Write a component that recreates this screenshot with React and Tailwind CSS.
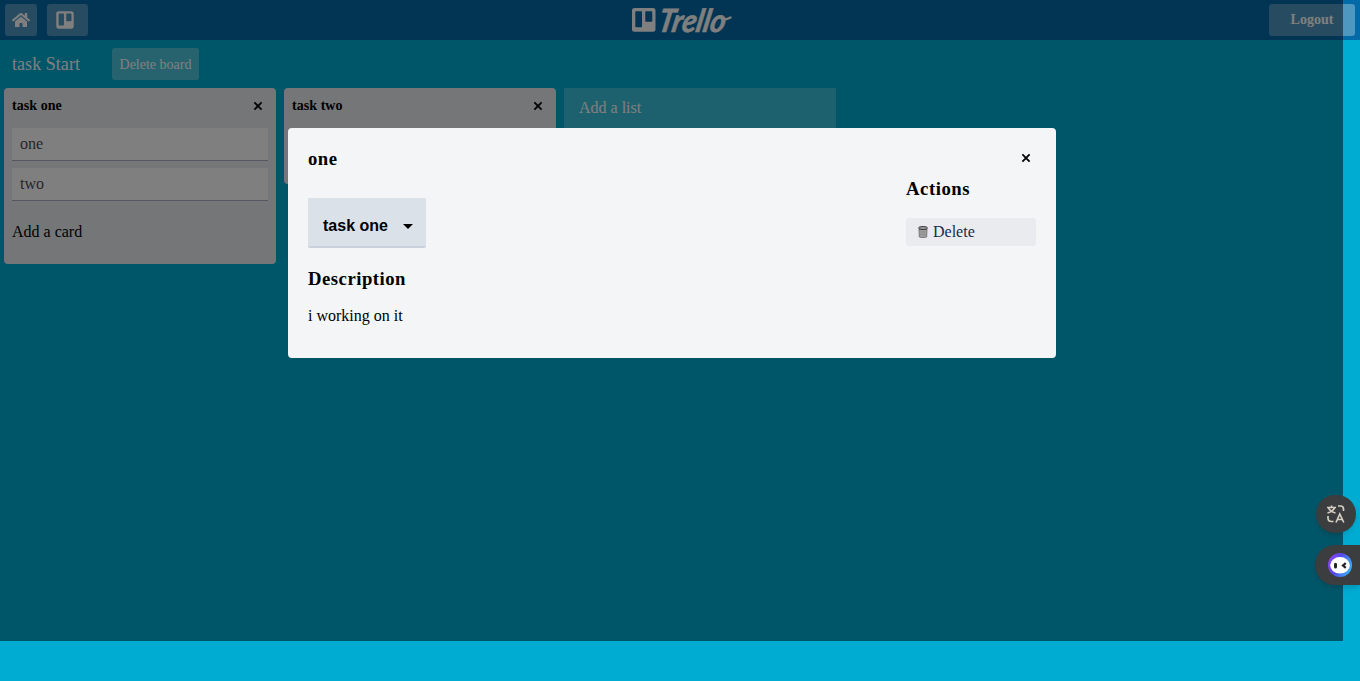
import { FaHome, FaTrello } from 'react-icons/fa';

function Cross() {
  return (
    <svg className="block h-2 w-2 overflow-visible" viewBox="0 0 8 8" aria-hidden="true">
      <path d="M.4.400 7.600 7.600M7.600.4.4 7.600" stroke="#000" strokeWidth="1.800" fill="none" />
    </svg>
  );
}

function Logo() {
  return (
    <svg className="block h-9 w-[102px]" viewBox="0 0 102 36" role="img" aria-label="Trello">
      <path
        fill="#fff"
        fillRule="evenodd"
        d="M3.500 4H22Q24.500 4 24.500 6.500V25.300Q24.500 27.800 22 27.800H3.500Q1 27.800 1 25.300V6.500Q1 4 3.500 4ZM5.100 7.300Q4.300 7.300 4.300 8.100V22.500Q4.300 23.300 5.100 23.300H10.200Q11 23.300 11 22.500V8.100Q11 7.300 10.200 7.300ZM15.100 7.300Q14.300 7.300 14.300 8.100V16.900Q14.300 17.700 15.100 17.700H20.500Q21.300 17.700 21.300 16.900V8.100Q21.300 7.300 20.500 7.300Z"
      />
      <text
        x="0"
        y="0"
        transform="translate(26 27.600) skewX(-11)"
        textLength="67"
        lengthAdjust="spacingAndGlyphs"
        fill="#fff"
        stroke="#fff"
        strokeWidth=".6"
        className="font-['Lato',sans-serif] text-[32px] font-bold italic"
      >
        Trello
      </text>
      <path d="M91 14.500Q94 16.500 99.500 13.500" stroke="#fff" strokeWidth="2.500" strokeLinecap="round" fill="none" />
    </svg>
  );
}

function Trash() {
  return (
    <svg className="block h-3 w-[10px]" viewBox="0 0 10 12" aria-hidden="true">
      <path d="M1 3H9L8.700 11Q5 12.200 1.300 11Z" fill="#aaa" stroke="#666" strokeWidth=".8" />
      <path d="M3 4V11M5 4V11M7 4V11M1.300 6H8.700M1.500 8.500H8.500" stroke="#858585" strokeWidth=".6" />
      <ellipse cx="5" cy="2" rx="4.500" ry="1.400" fill="#aaa" stroke="#222" strokeWidth=".9" />
    </svg>
  );
}

function List({ title, cards, className }) {
  return (
    <section className={`w-[272px] shrink-0 rounded bg-[#ebecf0] px-2 ${className}`}>
      <div className="flex h-10 items-start justify-between pr-[6px]">
        <h2 className="pt-2 text-[14px] leading-[19px] font-bold tracking-[.05px]">{title}</h2>
        <button className="mt-[14px]" aria-label="Remove list"><Cross /></button>
      </div>
      {cards.map((card) => (
        <div key={card} className="mb-[7px] h-[33px] border-b border-[#aab0c0] bg-white px-2 text-[16px] leading-8 text-[#4d4d57]">
          {card}
        </div>
      ))}
      {cards.length > 0 && <div className="pt-[15px] text-[16px] leading-[18px]">Add a card</div>}
    </section>
  );
}

export default function App() {
  return (
    <div className="relative h-[681px] w-[1360px] overflow-hidden bg-[#00acd2] font-['Liberation_Serif',serif] text-black">
      <header className="flex h-10 items-start justify-between bg-[#026aa7] px-[5px] pt-1 text-white">
        <div className="flex w-[626px] gap-[10px]">
          <button className="flex h-8 w-8 items-center justify-center rounded-[3px] bg-white/30">
            <FaHome size={18} />
          </button>
          <button className="flex h-8 w-[41px] items-center rounded-[3px] bg-white/30 pl-2">
            <FaTrello size={20} className="mb-px" />
          </button>
        </div>
        <Logo />
        <div className="flex w-[622px] justify-end">
          <button className="h-8 w-[86px] rounded-[3px] bg-white/30 text-[14px] leading-8 font-bold">Logout</button>
        </div>
      </header>
      <div className="flex h-12 items-center pl-3 text-white">
        <h1 className="w-[100px] text-[18px] tracking-[.05px]">task Start</h1>
        <button className="h-8 w-[87px] rounded-[3px] bg-[#4fc7dd] text-[14px] leading-[31px]">Delete board</button>
      </div>
      <main className="flex items-start gap-2 pl-1">
        <List title="task one" cards={['one', 'two']} className="h-[176px]" />
        <List title="task two" cards={[]} className="h-24" />
        <div className="h-10 w-[272px] bg-[#3dc2dd] pl-[15px] text-[16px] leading-10 text-white">Add a list</div>
      </main>

      <div className="absolute top-0 left-0 h-[641px] w-[1343px] bg-black/50" />

      <div className="absolute top-32 left-72 flex h-[230px] w-[768px] justify-between rounded bg-[#f4f5f7] px-5">
        <div>
          <h2 className="mt-5 text-[18.720px] leading-[22px] font-bold tracking-[.5px]">one</h2>
          <button className="mt-7 flex h-[50px] w-[118px] items-center rounded-b-[2px] border-b-2 border-[#cbd2dd] bg-[#dae1e8] pt-2 pl-[15px] font-['Liberation_Sans',sans-serif] text-[16px] font-bold">
            task one
            <svg className="ml-[15px] h-[5px] w-[10px]" viewBox="0 0 10 5"><path d="M0 0H10L5 5Z" /></svg>
          </button>
          <h2 className="mt-5 text-[18.720px] leading-[22px] font-bold tracking-[.5px]">Description</h2>
          <p className="mt-[17px] text-[16px] leading-[18px]">i working on it</p>
        </div>
        <aside className="w-[130px]">
          <button className="mt-[26px] mr-[6px] ml-auto block" aria-label="Close"><Cross /></button>
          <h2 className="mt-4 text-[18.720px] leading-[22px] font-bold tracking-[.55px]">Actions</h2>
          <button className="mt-[18px] flex h-7 w-[130px] items-center gap-[5px] rounded-[3px] bg-[#eaebef] pl-3 text-[16px] text-[#172b4d]">
            <Trash />
            Delete
          </button>
        </aside>
      </div>

      <button className="absolute top-[495px] left-[1316px] flex h-[38px] w-10 items-center justify-center rounded-full bg-[#3b3d3f] shadow-md" aria-label="Translate">
        <svg className="h-[18px] w-[18px]" viewBox="0 0 18 18" fill="none" stroke="#d4cec3" strokeWidth="1.700">
          <path d="M0 2.500H9M4.500.5V2.500M1.500 3Q3 6.500 8.500 8M7.500 3Q6 6.500.5 8M11 1H13.500Q16.500 1 16.500 4V6M1 11V13Q1 16.500 4.500 16.500H6.500M9 17.500 12.800 9 16.800 17.500M10.400 14.500H15.400" />
        </svg>
      </button>
      <button className="absolute top-[545px] left-[1315px] flex h-10 w-[45px] items-center rounded-l-full bg-[#3b3d3f] pl-[13px] shadow-md" aria-label="Assistant">
        <svg className="h-6 w-6" viewBox="0 0 24 24">
          <defs>
            <linearGradient id="ring" x1="0" y1=".3" x2="1" y2=".7">
              <stop offset="0" stopColor="#8b45f5" />
              <stop offset=".4" stopColor="#5548ea" />
              <stop offset="1" stopColor="#35b8f5" />
            </linearGradient>
          </defs>
          <circle cx="12" cy="12" r="12" fill="url(#ring)" />
          <ellipse cx="12" cy="12.300" rx="9.800" ry="8.300" fill="#fff" />
          <rect x="6" y="9.800" width="3" height="5.600" rx="1.500" fill="#222" />
          <path d="M17.800 10.200 15 12.500 17.800 14.800" stroke="#222" strokeWidth="2.200" fill="none" />
        </svg>
      </button>
    </div>
  );
}
